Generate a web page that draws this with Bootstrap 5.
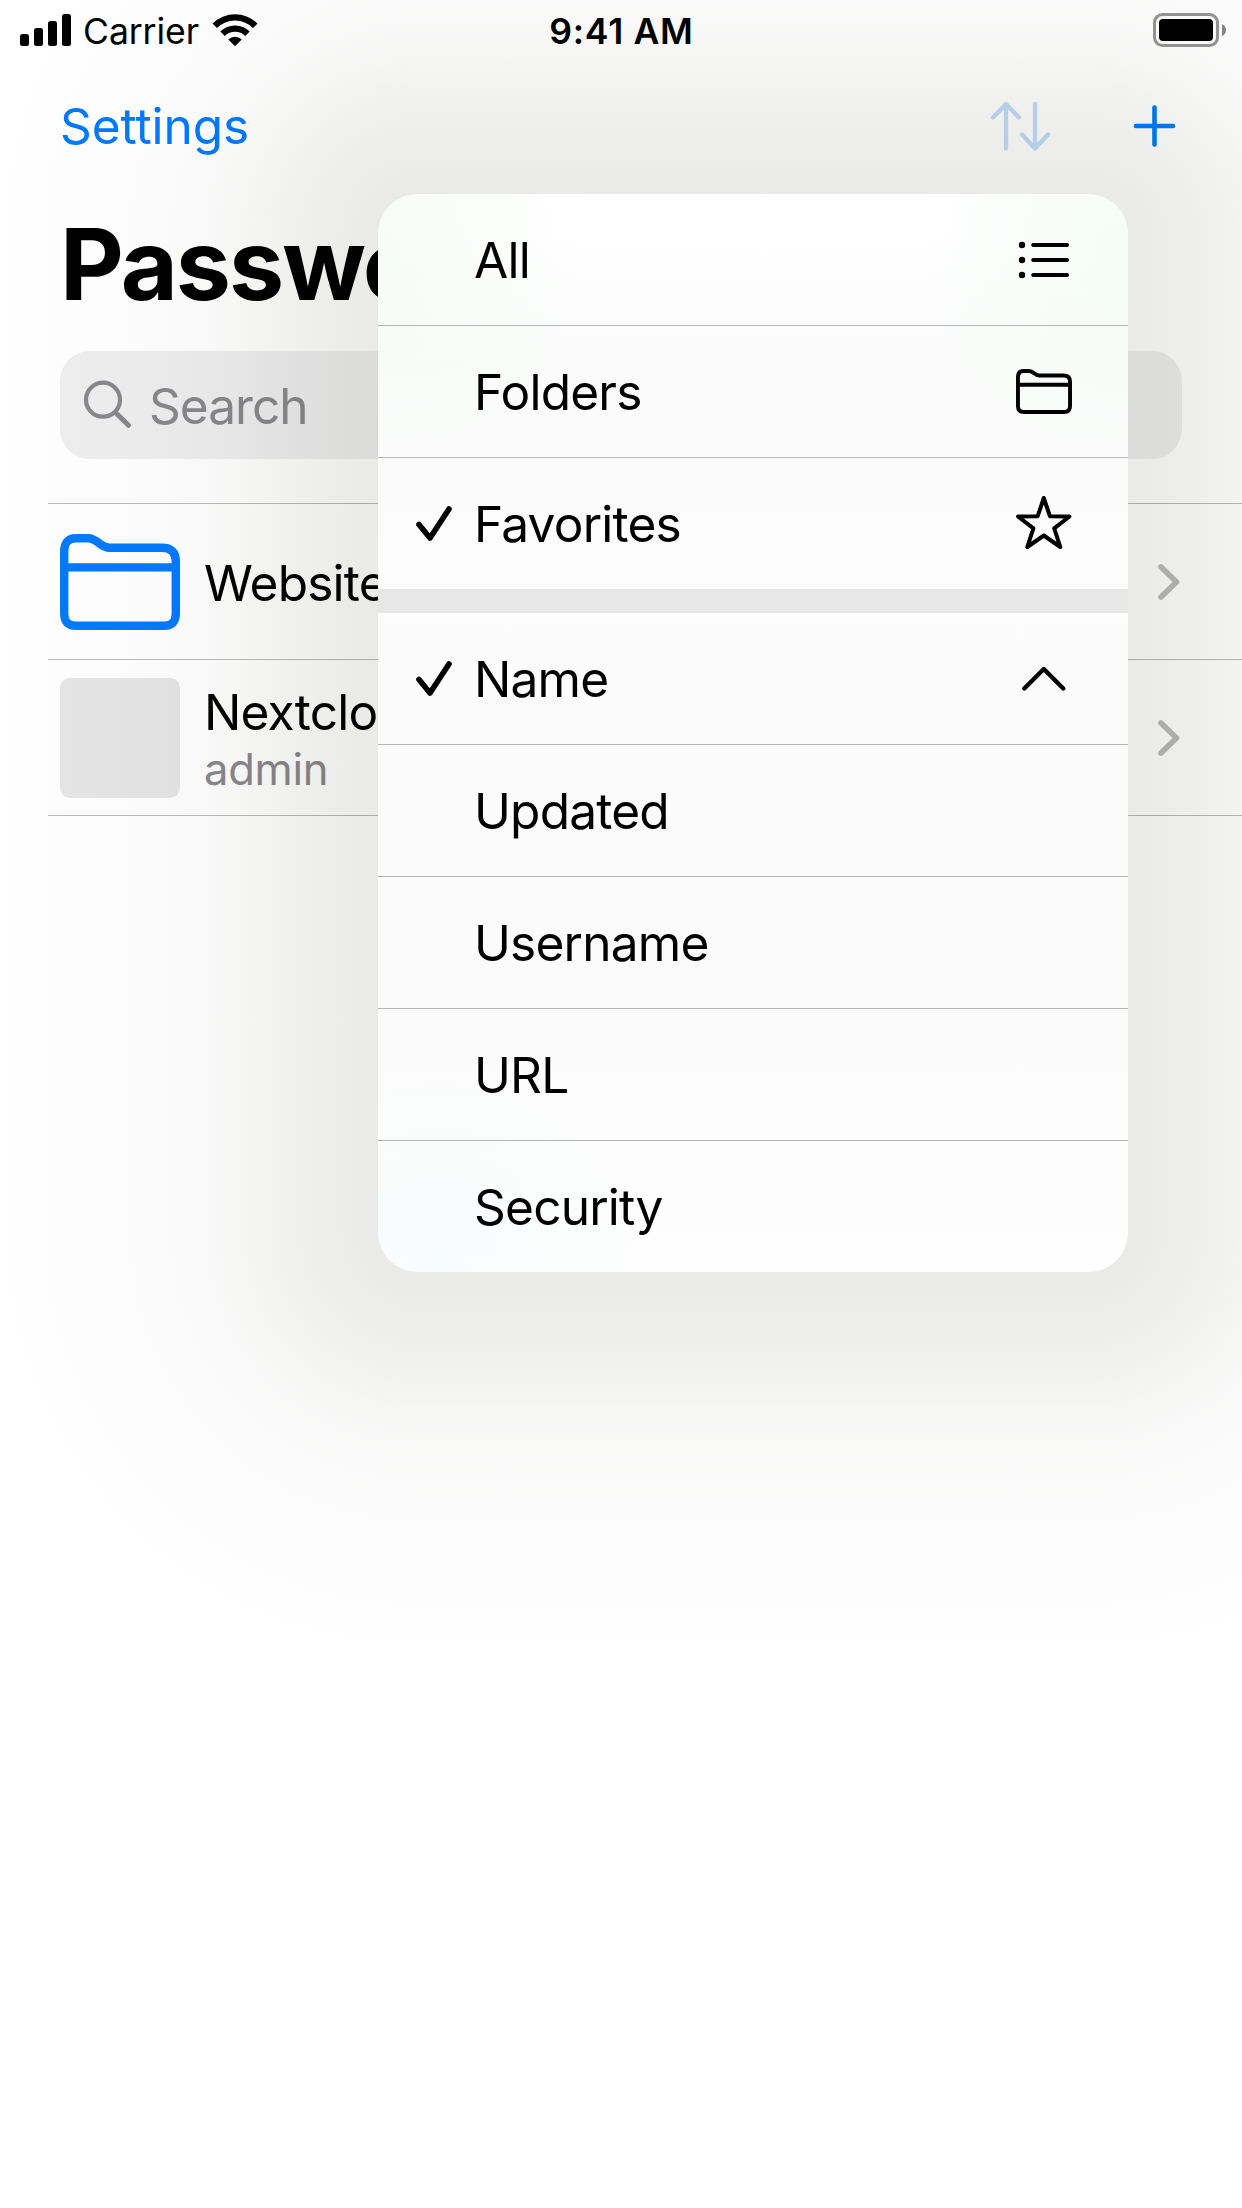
<!DOCTYPE html>
<html lang="en">
<head>
<meta charset="utf-8">
<meta name="viewport" content="width=device-width, initial-scale=1">
<title>Passwords</title>
<link href="https://cdn.jsdelivr.net/npm/bootstrap@5.3.0/dist/css/bootstrap.min.css" rel="stylesheet">
<style>
  body { font-family: Inter, Roboto, sans-serif; font-size: 49.6px; line-height: 60px; letter-spacing: -.8px; color: #000; background: #fff; }
  svg { display: block; flex: none; overflow: visible; }
  .phone { width: 1242px; height: 2208px; }
  .statusbar { height: 60px; padding: 0 15px 0 20px; font-size: 35.6px; line-height: 60px; letter-spacing: 0; }
  .statusbar > div { flex: 1 1 0; }
  .statusbar > .clock { flex: none; font-weight: 600; letter-spacing: .7px; padding: 3px 4px 0 0; }
  .carrier { padding-top: 3px; letter-spacing: -.1px; }
  .wifi { margin-left: 13px; }
  .navrow { height: 132px; padding: 0 67px 0 60px; }
  .plus { margin-left: 83px; }
  .tint { color: #007aff; text-decoration: none; letter-spacing: -.1px; }
  .bigtitle { height: 159px; padding: 12px 60px 0; margin: 0; font-size: 98.6px; line-height: 120px; font-weight: 700; letter-spacing: -2px; }
  .searchbox { height: 108px; margin: 0 60px; padding: 0 24px; border-radius: 30px; background: #eeeeef; color: #88888c; gap: 17px; letter-spacing: -1px; }
  .searchbox span { padding-top: 1px; }
  .entries { margin: 44px 0 0 48px; border-top: 1px solid #bbbbbd; }
  .entry { height: 156px; padding: 0 62px 0 12px; border-bottom: 1px solid #bbbbbd; gap: 24px; }
  .entry .flex-fill { padding-top: 2px; }
  .thumb { width: 120px; height: 120px; border-radius: 10px; background: #e5e5e5; }
  .subline { font-size: 43.6px; line-height: 55px; margin-bottom: -1px; color: #88888c; letter-spacing: -.3px; }
  .sortmenu { left: 378px; top: 194px; width: 750px; height: 1078px; border-radius: 39px; overflow: hidden;
    background:
      radial-gradient(circle at 0 5%, rgba(244,251,245,.8), rgba(244,251,245,0) 210px),
      radial-gradient(circle at 100% 5%, rgba(242,251,244,.8), rgba(242,251,244,0) 210px),
      radial-gradient(circle at 8% 100%, rgba(246,252,253,.7), rgba(246,252,253,0) 200px),
      linear-gradient(#fff 0, #fff 40px, #fafbfa 170px, #fcfcfc 350px, #fbfbfb 800px, #fdfefd 1078px); }
  /* wide ambient shadow round the menu: one falloff, nine-sliced into corners and edges */
  .menushade { left: -12px; top: -196px; width: 1530px; height: 1858px; pointer-events: none;
    border: 429px solid transparent;
    border-image: radial-gradient(closest-side,
      rgba(20,20,0,.092) 0, rgba(20,20,0,.090) 9%, rgba(20,20,0,.081) 17%, rgba(20,20,0,.067) 27%, rgba(20,20,0,.053) 34.5%,
      rgba(20,20,0,.040) 41%, rgba(20,20,0,.027) 50%, rgba(20,20,0,.018) 59%, rgba(20,20,0,.012) 70%,
      rgba(20,20,0,.007) 82%, rgba(20,20,0,.003) 93%, rgba(20,20,0,0) 100%) 49.9% / 429px stretch; }
  .choice { height: 132px; padding: 0 56px 0 40px; border-bottom: 1px solid #b4b5b5; }
  .choice.ends { border-bottom: 0; height: 131px; }
  .tick { width: 56px; }
  .splitter { height: 24px; background: #e7e7e7; }
</style>
</head>
<body>
<svg width="0" height="0" class="position-absolute">
  <symbol id="folder" viewBox="0 0 120 96">
    <path d="M4.2 18C4.2 8.5 8.500 4.200 15.500 4.200H28C38 4.200 39.500 13.700 50 13.700H102C111 13.700 115.800 18 115.800 27V79C115.800 88 112 91.800 103.500 91.800H16.500C8 91.800 4.200 88 4.200 79ZM4.200 33.400H115.800" fill="none" stroke="currentColor" stroke-width="8.400" stroke-linejoin="round"/>
  </symbol>
</svg>
<div class="phone position-relative overflow-hidden">
  <header class="statusbar d-flex align-items-center">
    <div class="d-flex align-items-center">
      <svg width="51" height="33" viewBox="0 0 51 33"><g><rect y="20" width="9" height="12" rx="2.500"/><rect x="14" y="14" width="9" height="18" rx="2.500"/><rect x="28" y="7" width="9" height="25" rx="2.500"/><rect x="42" width="9" height="32" rx="2.500"/></g></svg>
      <span class="carrier ms-2 ps-1">Carrier</span>
      <svg class="wifi" width="46" height="34" viewBox="0 0 46 34"><path d="M.5 10.500A32 32 0 0 1 45.500 10.500L41 15A25.500 25.500 0 0 0 5 15ZM8.300 18.500A21 21 0 0 1 37.700 18.500L33.200 23A14.500 14.500 0 0 0 12.800 23ZM16.300 26.500A9.800 9.800 0 0 1 29.700 26.500L23 33.300Z"/></svg>
    </div>
    <div class="clock">9:41 AM</div>
    <div class="d-flex justify-content-end">
      <svg width="74" height="34" viewBox="0 0 74 34"><rect x="1.500" y="1.500" width="63" height="31" rx="8" fill="none" stroke="#959595" stroke-width="3"/><rect x="6" y="6" width="54" height="22" rx="4"/><path d="M69 11Q73 13 73 17T69 23Z" fill="#858585"/></svg>
    </div>
  </header>
  <nav class="navrow d-flex align-items-center">
    <a class="tint me-auto" href="#">Settings</a>
    <svg width="60" height="50" viewBox="0 0 60 50" fill="none" stroke="#c2dcf8" stroke-width="4.300" stroke-linecap="round" stroke-linejoin="round"><path d="M16 47.500V3M3 16.500L16 3L29 16.500M45 3V47.500M32 33.500L45 47.500L58 33.500"/></svg>
    <svg class="plus" width="42" height="42" viewBox="0 0 42 42" fill="none" stroke="#007aff" stroke-width="4.600" stroke-linecap="round"><path d="M21.500 2.500V39.500M3 21H40"/></svg>
  </nav>
  <h1 class="bigtitle">Passwords</h1>
  <div class="searchbox d-flex align-items-center">
    <svg width="48" height="48" viewBox="0 0 48 48" fill="none" stroke="currentColor" stroke-width="4.200" stroke-linecap="round"><circle cx="19" cy="18.700" r="17"/><path d="M32 32L44.500 44.300" stroke-width="5"/></svg>
    <span>Search</span>
  </div>
  <main class="entries">
    <div class="entry d-flex align-items-center">
      <svg width="120" height="96" color="#007aff"><use href="#folder"/></svg>
      <div class="flex-fill">Websites</div>
      <svg width="22" height="36" viewBox="0 0 22 36" fill="none" stroke="#b9babb" stroke-width="5.600" stroke-linecap="round" stroke-linejoin="round"><path d="M3 3L18.500 18L3 33"/></svg>
    </div>
    <div class="entry d-flex align-items-center">
      <div class="thumb"></div>
      <div class="flex-fill">Nextcloud<div class="subline">admin</div></div>
      <svg width="22" height="36" viewBox="0 0 22 36" fill="none" stroke="#b9babb" stroke-width="5.600" stroke-linecap="round" stroke-linejoin="round"><path d="M3 3L18.500 18L3 33"/></svg>
    </div>
  </main>
  <div class="menushade position-absolute"></div>
  <div class="sortmenu position-absolute">
    <div class="choice d-flex align-items-center"><div class="tick"></div><span class="me-auto">All</span>
      <svg width="56" height="40" viewBox="0 0 56 40"><g><circle cx="6" cy="5" r="3.200"/><circle cx="6" cy="20" r="3.200"/><circle cx="6" cy="35" r="3.200"/></g><path d="M17.200 5H51M17.200 20H51M17.200 35H51" stroke="#000" stroke-width="4" stroke-linecap="round"/></svg></div>
    <div class="choice d-flex align-items-center"><div class="tick"></div><span class="me-auto">Folders</span>
      <svg width="56" height="45"><use href="#folder"/></svg></div>
    <div class="choice ends d-flex align-items-center"><div class="tick"><svg width="34" height="34" viewBox="0 0 34 34" fill="none" stroke="#000" stroke-width="5.600" stroke-linecap="round" stroke-linejoin="round"><path d="M1 17.500L12 31L31 2"/></svg></div><span class="me-auto">Favorites</span>
      <svg class="mb-1" width="56" height="56" viewBox="0 0 56 56" fill="none" stroke="#000" stroke-width="4" stroke-linejoin="round"><path d="M27.800 4L33.900 22.200L53.500 22.500L38.200 34.400L44.300 53L27.800 41.500L11.300 53L17.400 34.400L2 22.500L21.700 22.200Z"/></svg></div>
    <div class="splitter"></div>
    <div class="choice d-flex align-items-center"><div class="tick"><svg width="34" height="34" viewBox="0 0 34 34" fill="none" stroke="#000" stroke-width="5.600" stroke-linecap="round" stroke-linejoin="round"><path d="M1 17.500L12 31L31 2"/></svg></div><span class="me-auto">Name</span>
      <svg width="56" height="26" viewBox="0 0 56 26" fill="none" stroke="#000" stroke-width="4.400" stroke-linecap="round" stroke-linejoin="round"><path d="M8.300 22.500L27.800 3L47.300 22.500"/></svg></div>
    <div class="choice d-flex align-items-center"><div class="tick"></div><span>Updated</span></div>
    <div class="choice d-flex align-items-center"><div class="tick"></div><span>Username</span></div>
    <div class="choice d-flex align-items-center"><div class="tick"></div><span>URL</span></div>
    <div class="choice ends d-flex align-items-center"><div class="tick"></div><span>Security</span></div>
  </div>
</div>
<script src="https://cdn.jsdelivr.net/npm/bootstrap@5.3.0/dist/js/bootstrap.bundle.min.js"></script>
</body>
</html>
